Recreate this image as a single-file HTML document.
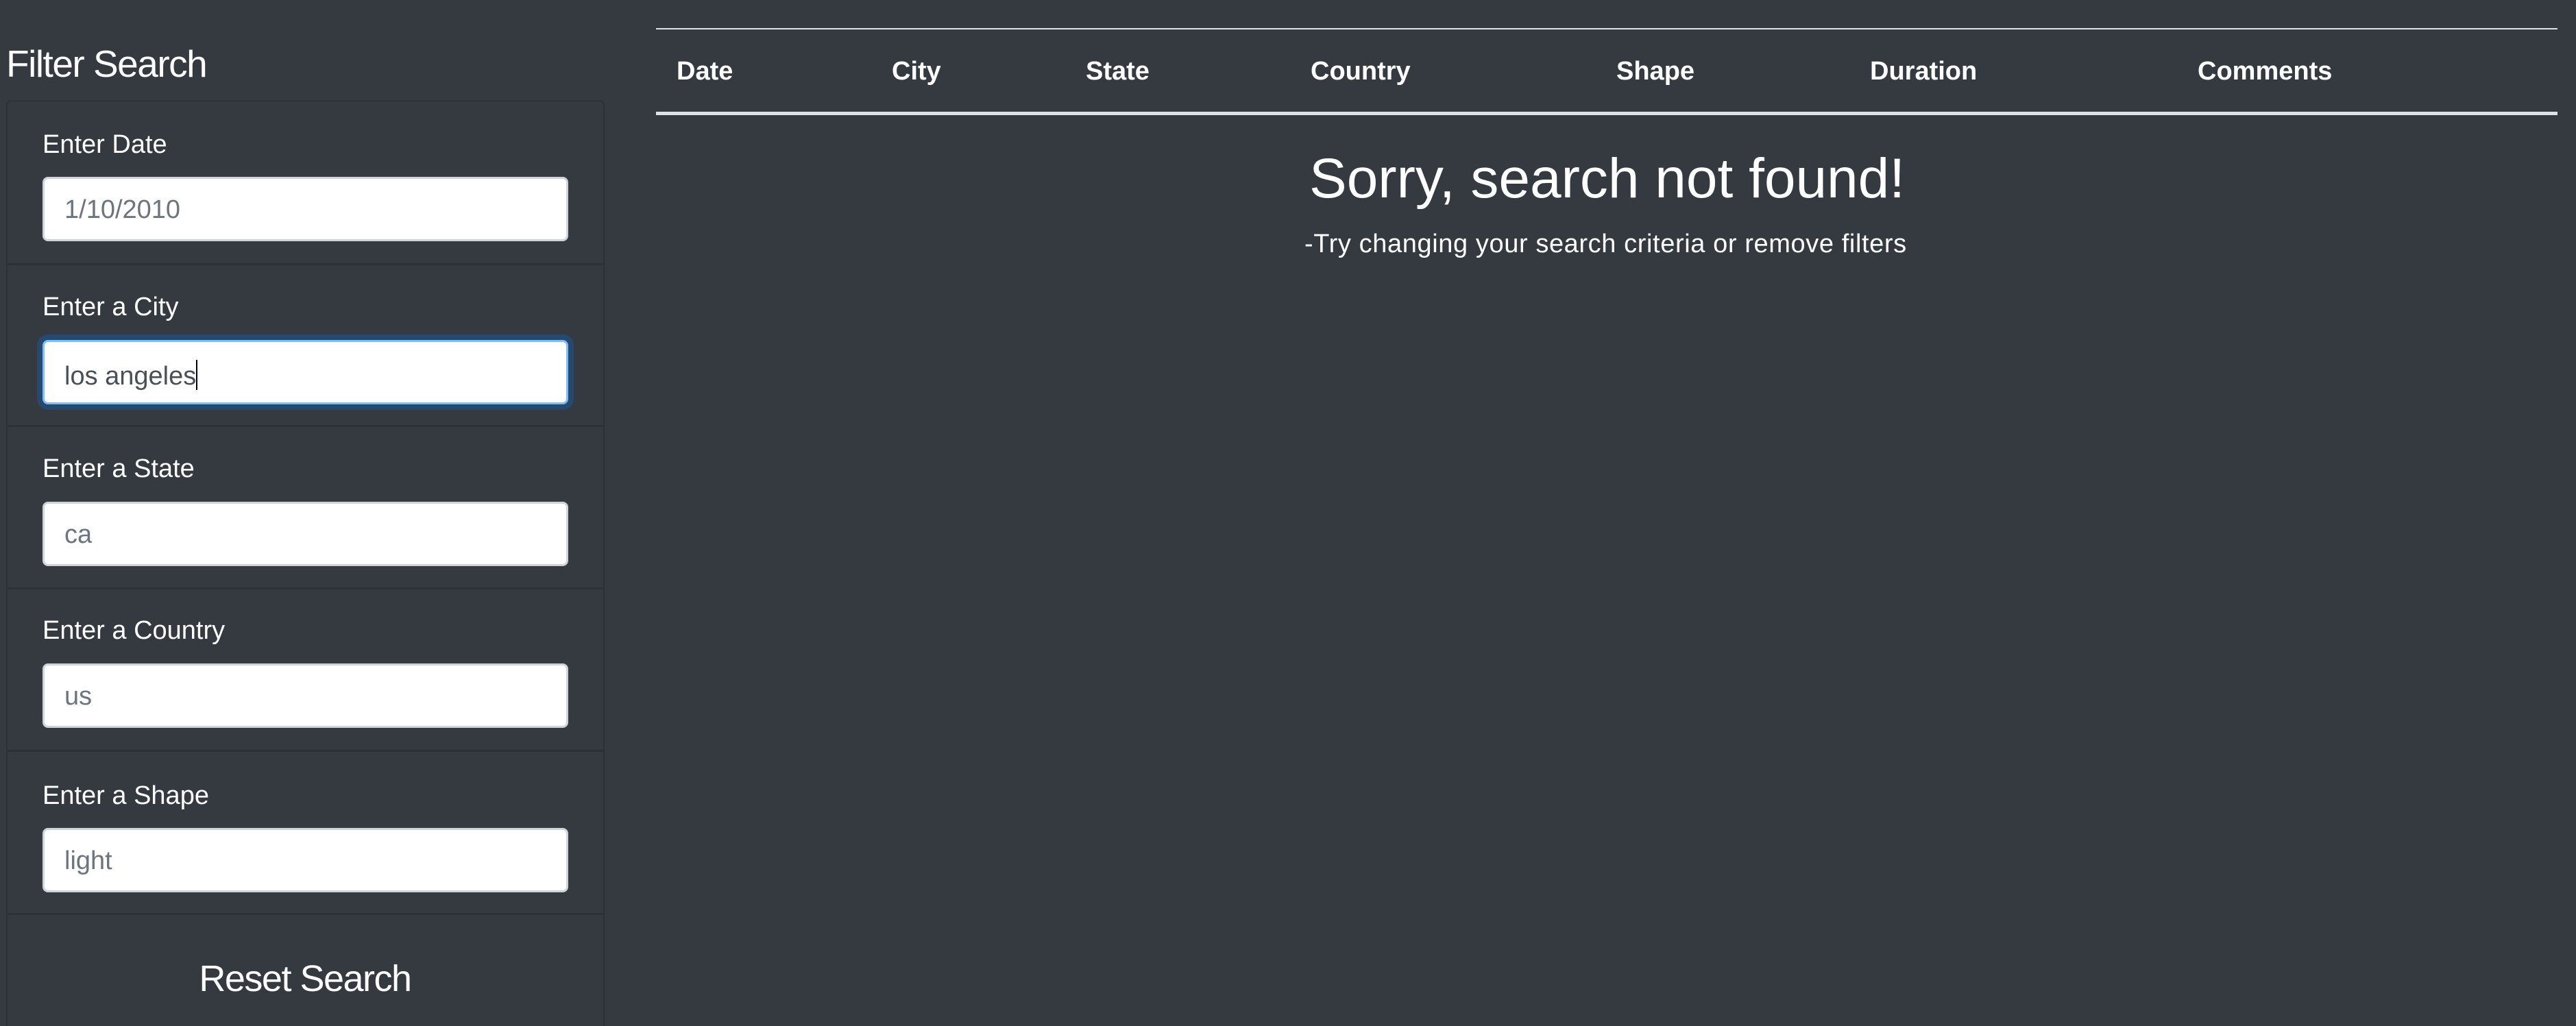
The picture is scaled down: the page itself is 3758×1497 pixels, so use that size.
<!DOCTYPE html>
<html><head><meta charset="utf-8"><style>
*{margin:0;padding:0;box-sizing:border-box}
html,body{width:3758px;height:1497px;overflow:hidden;background:#343a40;font-family:"Liberation Sans",sans-serif;color:#fff}
.a{position:absolute;line-height:1;white-space:nowrap}
.card{position:absolute;left:9px;top:146px;width:873px;height:1351px;border:2px solid #2c3136;border-bottom:none;border-radius:8px 8px 0 0}
.div{position:absolute;left:10px;width:871px;height:3px;background:#2c3136}
.inp{position:absolute;left:62px;width:767px;height:94px;background:#fff;border:3px solid #ced4da;border-radius:8px}
.ph{position:absolute;left:94px;font-size:38px;color:#6c757d;line-height:1}
.lbl{font-size:38px}
.th{font-size:38px;font-weight:bold}
</style></head><body>
<div class="a" style="left:9px;top:66px;font-size:55px;letter-spacing:-1.5px">Filter Search</div>
<div class="card"></div>
<div class="div" style="top:384px"></div>
<div class="div" style="top:620px"></div>
<div class="div" style="top:857px"></div>
<div class="div" style="top:1094px"></div>
<div class="div" style="top:1332px"></div>

<div class="a lbl" style="left:62px;top:192px">Enter Date</div>
<div class="inp" style="top:258px"></div>
<div class="ph" style="top:287px">1/10/2010</div>

<div class="a lbl" style="left:62px;top:429px">Enter a City</div>
<div class="inp" style="top:496px;border-color:#80bdff;box-shadow:0 0 0 8px #27496d"></div>
<div class="ph" style="top:525px;color:#495057">los angeles<span style="display:inline-block;width:2px;height:44px;background:#000;vertical-align:-8px"></span></div>

<div class="a lbl" style="left:62px;top:665px">Enter a State</div>
<div class="inp" style="top:732px"></div>
<div class="ph" style="top:761px">ca</div>

<div class="a lbl" style="left:62px;top:901px">Enter a Country</div>
<div class="inp" style="top:968px"></div>
<div class="ph" style="top:997px">us</div>

<div class="a lbl" style="left:62px;top:1142px">Enter a Shape</div>
<div class="inp" style="top:1208px"></div>
<div class="ph" style="top:1237px">light</div>

<div class="a" style="left:0;width:890px;text-align:center;top:1401px;font-size:54px;letter-spacing:-1.5px">Reset Search</div>

<div style="position:absolute;left:957px;top:41px;width:2774px;height:2px;background:#dee2e6"></div>
<div style="position:absolute;left:957px;top:163px;width:2774px;height:5px;background:#dee2e6"></div>
<div class="a th" style="left:987px;top:85px">Date</div>
<div class="a th" style="left:1301px;top:85px">City</div>
<div class="a th" style="left:1584px;top:85px">State</div>
<div class="a th" style="left:1912px;top:85px">Country</div>
<div class="a th" style="left:2358px;top:85px">Shape</div>
<div class="a th" style="left:2728px;top:85px">Duration</div>
<div class="a th" style="left:3206px;top:85px">Comments</div>

<div class="a" style="left:1910px;top:220px;font-size:82px;letter-spacing:0px">Sorry, search not found!</div>
<div class="a" style="left:1903px;top:337px;font-size:38px;letter-spacing:0.6px">-Try changing your search criteria or remove filters</div>
</body></html>
